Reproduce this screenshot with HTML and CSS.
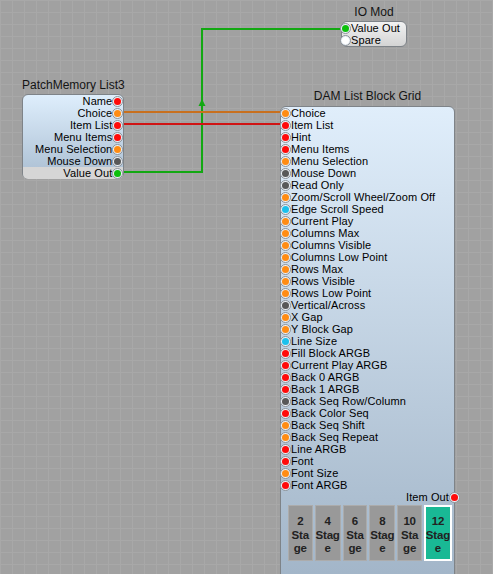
FILE: index.html
```html
<!DOCTYPE html>
<html>
<head>
<meta charset="utf-8">
<link rel="stylesheet" href="styles.css">
</head>
<body>
<div class="canvas">
  <svg class="wires" width="493" height="574" viewBox="0 0 493 574">
    <polyline points="123,172 202,172 202,29 342,29" fill="none" stroke="#12a812" stroke-width="2"/>
    <polygon points="202,99 198.5,106 205.5,106" fill="#12a812"/>
    <line x1="123" y1="112" x2="281" y2="112" stroke="#c8701e" stroke-width="2"/>
    <line x1="123" y1="124" x2="281" y2="124" stroke="#d01414" stroke-width="2"/>
  </svg>

  <div class="node node-io">
    <div class="title">IO Mod</div>
    <div class="box box-io">
      <div class="row in"><span class="socket"><span class="dot green"></span></span><span>Value Out</span></div>
      <div class="row in"><span class="socket"><span class="dot white"></span></span><span>Spare</span></div>
    </div>
  </div>

  <div class="node node-pm">
    <div class="title">PatchMemory List3</div>
    <div class="box box-pm">
      <div class="row out"><span>Name</span><span class="socket"><span class="dot red"></span></span></div>
      <div class="row out"><span>Choice</span><span class="socket"><span class="dot orange"></span></span></div>
      <div class="row out"><span>Item List</span><span class="socket"><span class="dot red"></span></span></div>
      <div class="row out"><span>Menu Items</span><span class="socket"><span class="dot red"></span></span></div>
      <div class="row out"><span>Menu Selection</span><span class="socket"><span class="dot orange"></span></span></div>
      <div class="row out"><span>Mouse Down</span><span class="socket"><span class="dot gray"></span></span></div>
      <div class="row out last"><span>Value Out</span><span class="socket"><span class="dot green"></span></span></div>
    </div>
  </div>

  <div class="node node-dam">
    <div class="title">DAM List Block Grid</div>
    <div class="box box-dam">
      <div class="row in"><span class="socket"><span class="dot orange"></span></span><span>Choice</span></div>
      <div class="row in"><span class="socket"><span class="dot red"></span></span><span>Item List</span></div>
      <div class="row in"><span class="socket"><span class="dot red"></span></span><span>Hint</span></div>
      <div class="row in"><span class="socket"><span class="dot red"></span></span><span>Menu Items</span></div>
      <div class="row in"><span class="socket"><span class="dot orange"></span></span><span>Menu Selection</span></div>
      <div class="row in"><span class="socket"><span class="dot gray"></span></span><span>Mouse Down</span></div>
      <div class="row in"><span class="socket"><span class="dot gray"></span></span><span>Read Only</span></div>
      <div class="row in"><span class="socket"><span class="dot orange"></span></span><span>Zoom/Scroll Wheel/Zoom Off</span></div>
      <div class="row in"><span class="socket"><span class="dot cyan"></span></span><span>Edge Scroll Speed</span></div>
      <div class="row in"><span class="socket"><span class="dot orange"></span></span><span>Current Play</span></div>
      <div class="row in"><span class="socket"><span class="dot orange"></span></span><span>Columns Max</span></div>
      <div class="row in"><span class="socket"><span class="dot orange"></span></span><span>Columns Visible</span></div>
      <div class="row in"><span class="socket"><span class="dot orange"></span></span><span>Columns Low Point</span></div>
      <div class="row in"><span class="socket"><span class="dot orange"></span></span><span>Rows Max</span></div>
      <div class="row in"><span class="socket"><span class="dot orange"></span></span><span>Rows Visible</span></div>
      <div class="row in"><span class="socket"><span class="dot orange"></span></span><span>Rows Low Point</span></div>
      <div class="row in"><span class="socket"><span class="dot gray"></span></span><span>Vertical/Across</span></div>
      <div class="row in"><span class="socket"><span class="dot orange"></span></span><span>X Gap</span></div>
      <div class="row in"><span class="socket"><span class="dot orange"></span></span><span>Y Block Gap</span></div>
      <div class="row in"><span class="socket"><span class="dot cyan"></span></span><span>Line Size</span></div>
      <div class="row in"><span class="socket"><span class="dot red"></span></span><span>Fill Block ARGB</span></div>
      <div class="row in"><span class="socket"><span class="dot red"></span></span><span>Current Play ARGB</span></div>
      <div class="row in"><span class="socket"><span class="dot red"></span></span><span>Back 0 ARGB</span></div>
      <div class="row in"><span class="socket"><span class="dot red"></span></span><span>Back 1 ARGB</span></div>
      <div class="row in"><span class="socket"><span class="dot gray"></span></span><span>Back Seq Row/Column</span></div>
      <div class="row in"><span class="socket"><span class="dot red"></span></span><span>Back Color Seq</span></div>
      <div class="row in"><span class="socket"><span class="dot orange"></span></span><span>Back Seq Shift</span></div>
      <div class="row in"><span class="socket"><span class="dot orange"></span></span><span>Back Seq Repeat</span></div>
      <div class="row in"><span class="socket"><span class="dot red"></span></span><span>Line ARGB</span></div>
      <div class="row in"><span class="socket"><span class="dot red"></span></span><span>Font</span></div>
      <div class="row in"><span class="socket"><span class="dot orange"></span></span><span>Font Size</span></div>
      <div class="row in"><span class="socket"><span class="dot red"></span></span><span>Font ARGB</span></div>
      <div class="row out item-out"><span>Item Out</span><span class="socket"><span class="dot red"></span></span></div>
      <div class="stages">
        <div class="stage">2<br>Sta<br>ge</div>
        <div class="stage">4<br>Stag<br>e</div>
        <div class="stage">6<br>Sta<br>ge</div>
        <div class="stage">8<br>Stag<br>e</div>
        <div class="stage">10<br>Sta<br>ge</div>
        <div class="stage selected">12<br>Stag<br>e</div>
      </div>
    </div>
  </div>
</div>
</body>
</html>
```

FILE: styles.css
```css
html, body {
  margin: 0;
  padding: 0;
  width: 493px;
  height: 574px;
  overflow: hidden;
}
body {
  background-color: #a1a1a1;
  background-image:
    linear-gradient(#a8a8a8 1px, transparent 1px),
    linear-gradient(90deg, #a8a8a8 1px, transparent 1px);
  background-size: 12px 12px;
  background-position: 0 0;
  font-family: "Liberation Sans", Arial, sans-serif;
  color: #000;
}
.canvas {
  position: relative;
  width: 493px;
  height: 574px;
}
.wires {
  position: absolute;
  left: 0;
  top: 0;
}
.node {
  position: absolute;
  display: flex;
  flex-direction: column;
  align-items: center;
}
.node-io { left: 341px; top: 5px; }
.node-pm { left: 22px; top: 78px; }
.node-dam { left: 280px; top: 89px; }

.title {
  font-size: 12px;
  line-height: 14px;
  height: 14px;
  white-space: nowrap;
  color: #141414;
  margin-bottom: 2px;
}
.node-dam .title { margin-bottom: 3px; }

.box {
  box-sizing: border-box;
  border: 1px solid #7e8388;
  border-radius: 6px;
  background: linear-gradient(180deg, #e1effc 0%, #a4b7ca 100%);
  display: flex;
  flex-direction: column;
}
.box-io {
  width: 66px;
  height: 26px;
  background: linear-gradient(180deg, #f2f2f2 0%, #d4d4d4 100%);
}
.box-pm {
  width: 102px;
  height: 85px;
  background: linear-gradient(180deg, #deeefc 0%, #aabed2 100%);
}
.box-dam {
  width: 175px;
  height: 476px;
  background: linear-gradient(180deg, #e0eefb 0%, #a2b5c8 100%);
  padding-bottom: 4px;
}

.row {
  display: flex;
  align-items: center;
  height: 12px;
  font-size: 11px;
  line-height: 12px;
  white-space: nowrap;
  letter-spacing: 0.1px;
}
.row.in { justify-content: flex-start; }
.row.out { justify-content: flex-end; }
.box-io .row.in .socket { margin-left: -2px; }
.box-dam .row.in .socket { margin-left: -1px; }
.box-pm .row.out .socket { margin-right: 0; }
.row.last {
  background: #d6d6d6;
  border-radius: 0 0 5px 5px;
  height: 13px;
}
.item-out .socket { margin-right: -6px; }

.socket {
  box-sizing: border-box;
  width: 11px;
  height: 11px;
  border-radius: 50%;
  border: 1px solid #8c9299;
  background: #edf2f7;
  display: flex;
  align-items: center;
  justify-content: center;
  flex: none;
}
.dot {
  width: 7px;
  height: 7px;
  border-radius: 50%;
}
.red { background: #ff0a0a; }
.orange { background: #ff8c14; }
.gray { background: #585858; }
.cyan { background: #1cc0ec; }
.green { background: #0cc00c; }
.white { background: #ffffff; }

.stages {
  display: grid;
  grid-template-columns: repeat(6, 1fr);
  gap: 2px;
  margin: 2px 2px 0 7px;
  height: 56px;
}
.stage {
  box-sizing: border-box;
  background: #999999;
  border: 1px solid #acacac;
  font-weight: bold;
  font-size: 11.5px;
  line-height: 13.5px;
  letter-spacing: -0.2px;
  color: #222;
  text-align: center;
  padding-top: 9px;
  white-space: nowrap;
  display: flex;
  flex-direction: column;
  align-items: center;
}
.stage.selected {
  background: #19b995;
  border: 2px solid #ffffff;
  padding-top: 8px;
}
```
